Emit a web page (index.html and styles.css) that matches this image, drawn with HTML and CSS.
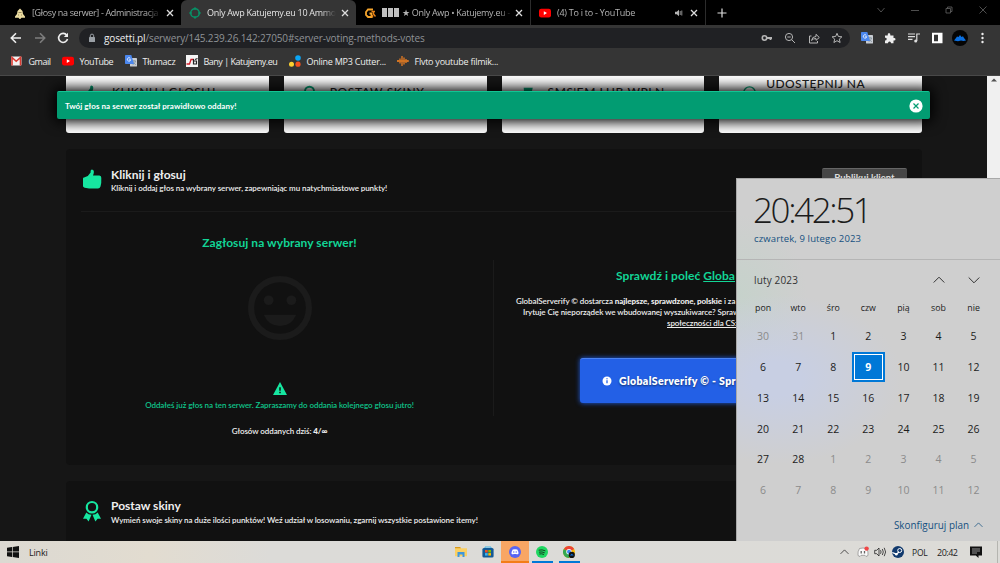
FILE: index.html
```html
<!DOCTYPE html>
<html lang="pl">
<head>
    <meta charset="UTF-8">
    <meta name="viewport" content="width=device-width, initial-scale=1.0">
    <title>Only Awp Katujemy.eu 10 Ammo</title>
    <link rel="stylesheet" href="styles.css">
</head>
<body>
<svg class="defs">
    <symbol id="close" viewBox="0 0 10 10"><path d="M2 2l6 6M8 2l-6 6" stroke="currentColor" stroke-width="1.3"/></symbol>
    <symbol id="youtube" viewBox="0 0 12 12"><rect x="0" y="1.8" width="12" height="8.6" rx="2.2" fill="#f00"/><path d="M4.8 4.2v3.8L8 6.1z" fill="#fff"/></symbol>
    <symbol id="translate" viewBox="0 0 12 12"><rect x="5" y="3" width="7" height="8.6" rx=".7" fill="#c9cdd3"/><path d="M7 6h4M9 5v1M10.5 6c-.5 2-1.500 3-3 3.800M8 6.500c.5 1.500 1.500 2.500 3 3.200" stroke="#6b7f8c" stroke-width=".6" fill="none"/><path d="M.7 0h5.600L9 9H.700Q0 9 0 8.300V.7Q0 0 .7 0z" fill="#4b87ee"/><path d="M5.300 3.300A1.700 1.700 0 1 0 5.700 4.700H4.200" stroke="#fff" stroke-width=".8" fill="none"/></symbol>
    <symbol id="up" viewBox="0 0 12 8"><path d="M.7 6.500L6 1.200l5.300 5.300" fill="none" stroke="currentColor" stroke-width="1"/></symbol>
    <symbol id="thumb" viewBox="0 0 20 20"><path d="M1 9.500Q1 8.500 2 8.500L5.800 7 8.600 3.400V2Q8.700.4 10 .4q1.900.3 1.900 2.400 0 1.700-.9 3.800h6.400q2 .2 1.900 2.200.3 5.400-.8 8.700-.7 1.900-2.500 1.900-7 .6-13.300-.7Q1 18.300 1 17.300z" fill="currentColor"/></symbol>
    <symbol id="award" viewBox="0 0 20 22"><circle cx="10" cy="7.200" r="5.200" fill="none" stroke="currentColor" stroke-width="2.200"/><path d="M4.300 12.500L1 18.800l3.400-.1L6.600 21.600 9.500 14.800Q6.300 14.700 4.300 12.500zM15.700 12.500L19 18.800l-3.400-.1-2.200 2.900-2.900-6.800q3.200-.1 5.200-2.300z" fill="currentColor"/></symbol>
</svg>
<div class="desktop">
    <div class="tabs">
        <div class="tab">
            <svg class="fav" viewBox="0 0 12 12"><path d="M6 1.500L8.500 4 9 7l2 2.500v1.300H7.500L6.300 12H5.600L4.500 10.800H1V9.500L3 7 3.500 4z" fill="#eadba0"/><path d="M4.500 5.500h3M4 8h1M7 8h1" stroke="#70623a" stroke-width=".7"/></svg>
            <span class="title t1">[Głosy na serwer] - Administracja</span>
            <svg class="x"><use href="#close"/></svg>
        </div>
        <div class="tab active">
            <svg class="fav" viewBox="0 0 12 12"><circle cx="6" cy="6" r="4.300" fill="none" stroke="#069468" stroke-width="1.500"/><path d="M6 0v3M6 9v3M0 6h3M9 6h3" stroke="#069468" stroke-width="1"/></svg>
            <span class="title t2">Only Awp Katujemy.eu 10 Ammo</span>
            <svg class="x"><use href="#close"/></svg>
        </div>
        <div class="tab sep">
            <svg class="fav" viewBox="0 0 12 12"><path d="M9 2.500H4L2 5v3l2 2h3.500V6.500H5.500" stroke="#f6a52c" stroke-width="1.800" fill="none"/><path d="M7.500 4.500H11M9.500 4.500V7L11.500 9.500M8.500 8v2.500" stroke="#e98317" stroke-width="1.400" fill="none"/></svg>
            <span class="blocks"><i></i><i></i><i></i></span>
            <span class="title t3">★ Only Awp • Katujemy.eu -</span>
            <svg class="x"><use href="#close"/></svg>
        </div>
        <div class="tab sep">
            <svg class="fav"><use href="#youtube"/></svg>
            <span class="title t4">(4) To i to - YouTube</span>
            <svg class="sound" viewBox="0 0 10 10"><path d="M1 3.700h1.800L5 1.700v6.600L2.800 6.300H1z" fill="currentColor"/><path d="M6.200 3v4M7.800 2.500v5" stroke="currentColor" stroke-width=".8"/></svg>
            <svg class="x"><use href="#close"/></svg>
        </div>
        <svg class="plus" viewBox="0 0 10 10"><path d="M5 .5v9M.5 5h9" stroke="#ddd" stroke-width="1.200"/></svg>
        <div class="winbtns">
            <svg viewBox="0 0 10 10"><path d="M1.500 3L5 7l3.500-4"/></svg>
            <svg viewBox="0 0 10 10"><path d="M1 5.500h8"/></svg>
            <svg viewBox="0 0 10 10"><path d="M2 3.500h4.500V8H2zM3.500 3.500V2H8v4.500H6.500"/></svg>
            <svg viewBox="0 0 10 10"><path d="M1.500 1.500l7 7M8.500 1.500l-7 7"/></svg>
        </div>
    </div>

    <div class="toolbar">
        <div class="nav">
            <svg viewBox="0 0 12 12"><path d="M11 6H1.500M6 1.300L1.300 6 6 10.700" stroke="#eee"/></svg>
            <svg viewBox="0 0 12 12"><path d="M1 6h9.500M6 1.300L10.700 6 6 10.700" stroke="#7d7d7d"/></svg>
            <svg viewBox="0 0 12 12"><path d="M9.800 3.300A4.500 4.500 0 1 0 10.500 7" stroke="#eee"/><path d="M11 .800V5H6.800z" fill="#eee"/></svg>
        </div>
        <div class="address">
            <svg class="lock" viewBox="0 0 8 10"><rect x="1" y="4" width="6" height="5" rx=".6" fill="#9aa0a6"/><path d="M2.300 4.500V2.800a1.700 1.700 0 0 1 3.400 0v1.700" fill="none" stroke="#9aa0a6"/></svg>
            <span class="url"><b>gosetti.pl</b>/serwery/145.239.26.142:27050#server-voting-methods-votes</span>
            <div class="addr-icons">
                <svg viewBox="0 0 12 12"><circle cx="3.500" cy="6" r="2.200" stroke-width="1.600"/><path d="M5.500 6h5.500M9.500 6v2" stroke-width="1.800"/></svg>
                <svg viewBox="0 0 12 12"><circle cx="5" cy="5" r="3.600"/><path d="M7.700 7.700L11 11M3.300 5h3.400"/></svg>
                <svg viewBox="0 0 12 12"><path d="M3.500 4H1.500v7h8V9M3.500 8.500Q4 4.500 8 4.500V2.300L11.300 5.500 8 8.300V6.500Q5 6.500 3.500 8.500z"/></svg>
                <svg viewBox="0 0 12 12"><path d="M6 1.300l1.400 3.200 3.500.3-2.600 2.300.8 3.400L6 8.700l-3.100 1.800.8-3.400L1.100 4.800l3.500-.3z"/></svg>
            </div>
        </div>
        <div class="ext">
            <svg viewBox="0 0 12 12"><use href="#translate"/></svg>
            <svg viewBox="0 0 12 12"><path d="M1 3.500h2.700Q3.400 1 5 1t1.400 2.500H9.500V6Q11.500 5.700 11.500 7.200T9.500 8.500V11.300H7Q7 9.500 5.500 9.500T4 11.300H1V8.500Q2.700 8.500 2.700 7T1 5.700z" fill="#eee"/></svg>
            <svg viewBox="0 0 12 12"><path d="M0 2h7M0 4.700h7M0 7.400h4.500" stroke="#ddd" stroke-width="1.200"/><circle cx="7.700" cy="9" r="1.500" fill="#ddd"/><path d="M8.800 9V2H12" stroke="#ddd" stroke-width="1.200" fill="none"/></svg>
            <svg viewBox="0 0 12 12"><path d="M1 .8h10.500v10.400H1zM3 2.800v6.400h4V2.800z" fill="#fff" fill-rule="evenodd"/></svg>
            <svg class="avatar" viewBox="0 0 16 16"><circle cx="8" cy="8" r="8" fill="#050505"/><path d="M2 10.500L4 8l1-1.500L6.500 7 8 5l1.500 2L11 6.300 12 8l2 2.500L11.500 11 9 10.500 6 11.200z" fill="#0a6fe0"/></svg>
            <svg viewBox="0 0 12 12"><g fill="#eee"><circle cx="5.500" cy="2" r="1.200"/><circle cx="5.500" cy="6" r="1.200"/><circle cx="5.500" cy="10" r="1.200"/></g></svg>
        </div>
    </div>

    <div class="bookmarks">
        <div class="bm"><svg viewBox="0 0 12 12"><rect y="1.500" width="10.500" height="9" rx="1" fill="#f2f2f2"/><path d="M1 10.500V2.500L5.200 6.300 9.500 2.500v8" fill="none" stroke="#d93a31" stroke-width="1.600"/></svg><span>Gmail</span></div>
        <div class="bm"><svg><use href="#youtube"/></svg><span>YouTube</span></div>
        <div class="bm"><svg><use href="#translate"/></svg><span>Tłumacz</span></div>
        <div class="bm"><svg viewBox="0 0 12 12"><path d="M0 0h12v12H0z" fill="#f5f5f5"/><path d="M.5 9h3L5 4.500h3" stroke="#d21f2b" stroke-width="1.300" fill="none"/><path d="M7.500 4v5h3V6H8M9 4.500l2.500-1" stroke="#222" stroke-width="1.200" fill="none"/></svg><span>Bany | Katujemy.eu</span></div>
        <div class="bm"><svg viewBox="0 0 12 12"><circle cx="9" cy="3" r="2.800" fill="#0aa5f5"/><circle cx="2.500" cy="9.200" r="2.500" fill="#fdd02f"/><circle cx="9" cy="9.200" r="2.600" fill="#f4511e"/></svg><span>Online MP3 Cutter...</span></div>
        <div class="bm"><svg viewBox="0 0 12 12"><path d="M1 5v2M3 3.500v5M5 1v10M7 2.500v7M9 4v4M11 5v2M0 6h11.500" stroke="#f58220" stroke-width="1.200"/></svg><span>Flvto youtube filmik...</span></div>
    </div>

    <div class="viewport">
        <div class="page">
            <div class="cards">
                <div class="card"><svg><use href="#thumb"/></svg><span class="c1">KLIKNIJ I GŁOSUJ</span></div>
                <div class="card"><svg><use href="#award"/></svg><span class="c2">POSTAW SKINY</span></div>
                <div class="card"><svg viewBox="0 0 20 20"><path d="M6 3h9.500L14 10H6.500z" fill="currentColor"/></svg><span class="c3">SMS'EM LUB WPLN</span></div>
                <div class="card high"><svg viewBox="0 0 20 20"><circle cx="10" cy="8" r="6" fill="none" stroke="currentColor" stroke-width="1.500"/></svg><span class="c4">UDOSTĘPNIJ NA</span></div>
            </div>

            <section class="panel">
                <header>
                    <svg class="ico"><use href="#thumb"/></svg>
                    <div>
                        <h2>Kliknij i głosuj</h2>
                        <p>Kliknij i oddaj głos na wybrany serwer, zapewniając mu natychmiastowe punkty!</p>
                    </div>
                    <button class="gray">Publikuj klient</button>
                </header>
                <div class="cols">
                    <div class="left">
                        <h3>Zagłosuj na wybrany serwer!</h3>
                        <svg class="smile" viewBox="0 0 62 62"><circle cx="31" cy="31" r="28" fill="none" stroke="#1b1b1b" stroke-width="6"/><g fill="#1b1b1b"><circle cx="20" cy="23.500" r="4.700"/><circle cx="42" cy="23.500" r="4.700"/><path d="M15.300 37.500h31.400Q42 48.500 31 48.500T15.300 37.500z"/></g></svg>
                        <svg class="warn" viewBox="0 0 14 13"><path d="M7 0l7 13H0z" fill="#16e6a0"/><path d="M7 5.200v3.600M7 9.800v1.500" stroke="#111" stroke-width="1.500"/></svg>
                        <p class="done">Oddałeś już głos na ten serwer. Zapraszamy do oddania kolejnego głosu jutro!</p>
                        <p class="count">Głosów oddanych dziś: <b>4/∞</b></p>
                    </div>
                    <div class="right">
                        <h3>Sprawdź i poleć <u>Globa</u></h3>
                        <p class="l1">GlobalServerify © dostarcza <b>najlepsze, sprawdzone, polskie</b> i za</p>
                        <p class="l2">Irytuje Cię nieporządek we wbudowanej wyszukiwarce? Spraw</p>
                        <p class="l3"><u>społeczności dla CS:</u></p>
                        <div class="blue"><svg viewBox="0 0 10 10"><circle cx="5" cy="5" r="4.500" fill="#fff"/><path d="M5 4.300v3M5 2.200v1.100" stroke="#2360e6" stroke-width="1.300"/></svg><span>GlobalServerify © - Spr</span></div>
                    </div>
                </div>
            </section>

            <section class="panel second">
                <header>
                    <svg class="ico award"><use href="#award"/></svg>
                    <div>
                        <h2>Postaw skiny</h2>
                        <p>Wymień swoje skiny na duże ilości punktów! Weź udział w losowaniu, zgarnij wszystkie postawione itemy!</p>
                    </div>
                </header>
            </section>

            <div class="alert">
                <span>Twój głos na serwer został prawidłowo oddany!</span>
                <svg viewBox="0 0 14 14"><circle cx="7" cy="7" r="6.600" fill="#fff"/><path d="M4.500 4.500l5 5M9.500 4.500l-5 5" stroke="#029c72" stroke-width="1.200"/></svg>
            </div>
        </div>
        <div class="scrollbar"><svg viewBox="0 0 6 4"><path d="M0 3.500L3 .5l3 3z" fill="#505050"/></svg></div>
    </div>

    <div class="taskbar">
        <svg class="win" viewBox="0 0 12 12"><path d="M0 1.700L5 1v4.600H0zM5.700.9L12 0v5.600H5.700zM0 6.300h5V11l-5-.7zM5.700 6.300H12V12l-6.300-.9z" fill="#111"/></svg>
        <span class="linki">Linki</span>
        <div class="apps">
            <div class="app"><svg viewBox="0 0 12 12"><path d="M0 1h5l1 1.200h6v8H0z" fill="#fbd063"/><path d="M0 1h5l1 1.200H0z" fill="#d99a1c"/><path d="M2.500 6h7v5H7.500V8.500h-3V11h-2z" fill="#3f97dd"/></svg></div>
            <div class="app"><svg viewBox="0 0 12 12"><path d="M3 2.500V1h6v1.500" stroke="#42b6e8" fill="none"/><rect x=".4" y="2" width="11.200" height="9.600" rx="1.500" fill="#135a96"/><path d="M3 4h2.700v2.500H3z" fill="#f25022"/><path d="M6.300 4H9v2.500H6.300z" fill="#7fba00"/><path d="M3 7.100h2.700v2.500H3z" fill="#38b6f1"/><path d="M6.300 7.100H9v2.500H6.300z" fill="#ffb900"/></svg></div>
            <div class="app discord"><svg viewBox="0 0 12 12"><circle cx="6" cy="6" r="6" fill="#5865f2"/><path d="M3.700 3.600Q6 2.900 8.300 3.600 9.500 5.500 9.500 7.800L8 8.600 7.400 7.900H4.600L4 8.600 2.500 7.800Q2.500 5.500 3.700 3.600z" fill="#fff"/><circle cx="4.800" cy="6" r=".7" fill="#5865f2"/><circle cx="7.200" cy="6" r=".7" fill="#5865f2"/></svg></div>
            <div class="app run"><svg viewBox="0 0 12 12"><circle cx="6" cy="6" r="6" fill="#1ed760"/><path d="M2.700 4.200q3.500-1 6.700.7M3 6.200q3-.8 5.700.6M3.300 8q2.500-.6 4.700.5" stroke="#173d24" fill="none"/></svg></div>
            <div class="app run"><svg viewBox="0 0 12 12"><circle cx="6" cy="6" r="6" fill="#fbbc05"/><path d="M6 6L.8 3A6 6 0 0 1 11.200 3z" fill="#ea4335"/><path d="M.8 3A6 6 0 0 0 6 12L8 7z" fill="#34a853"/><circle cx="6" cy="5.700" r="2.700" fill="#fff"/><circle cx="6" cy="5.700" r="2" fill="#4285f4"/><circle cx="8.800" cy="8.900" r="3.100" fill="#111"/><path d="M6.800 9.500l2-1.800 2 1.800z" fill="#0a6fe0"/></svg></div>
        </div>
        <div class="tray">
            <svg class="chev"><use href="#up"/></svg>
            <svg class="dc" viewBox="0 0 12 12"><path d="M2.500 2.500Q6 1.500 9.500 2.500 11.500 5.500 11 9.500L9 10.500 8 9.300H4L3 10.500 1 9.500Q.5 5.500 2.500 2.500z" fill="#fafafa" stroke="#777" stroke-width=".6"/><path d="M4.200 5v2.500M7.500 5v2.500" stroke="#666" stroke-width="1.300"/><circle cx="9.600" cy="2.600" r="2.200" fill="#f04747"/></svg>
            <svg class="spk" viewBox="0 0 13 12"><path d="M.7 4.300h2L5 2v8L2.700 7.700h-2zM6.500 4.200q1.200 1.800 0 3.600M8.300 3q2 3 0 6M10.200 1.800q2.800 4.200 0 8.400" fill="none" stroke="#222" stroke-width=".8"/></svg>
            <svg class="steam" viewBox="0 0 12 12"><circle cx="6" cy="6" r="6" fill="#123a6d"/><circle cx="7.700" cy="4.500" r="2" fill="none" stroke="#fff" stroke-width="1"/><path d="M.3 6.500l4 1.700L7 6" stroke="#fff" stroke-width="1.300" fill="none"/><circle cx="4.300" cy="8.300" r="1.300" fill="#fff"/></svg>
            <span class="lang">POL</span>
            <span class="clock">20:42</span>
            <svg class="note" viewBox="0 0 12 12"><path d="M0 .5h12v9H8.500v2.500L5.800 9.500H0z" fill="#111"/><path d="M2 3h8M2 5h8M2 7h5" stroke="#ccc" stroke-width=".7"/></svg>
        </div>
    </div>

    <div class="calendar">
        <div class="now">
            <div class="time">20:42:51</div>
            <div class="date">czwartek, 9 lutego 2023</div>
        </div>
        <div class="month">
            <span>luty 2023</span>
            <svg viewBox="0 0 12 8"><use href="#up"/></svg>
            <svg class="down" viewBox="0 0 12 8"><use href="#up"/></svg>
        </div>
        <div class="week names"><span>pon</span><span>wto</span><span>śro</span><span>czw</span><span>pią</span><span>sob</span><span>nie</span></div>
        <div class="week"><span class="off">30</span><span class="off">31</span><span>1</span><span>2</span><span>3</span><span>4</span><span>5</span></div>
        <div class="week"><span>6</span><span>7</span><span>8</span><span class="today">9</span><span>10</span><span>11</span><span>12</span></div>
        <div class="week"><span>13</span><span>14</span><span>15</span><span>16</span><span>17</span><span>18</span><span>19</span></div>
        <div class="week"><span>20</span><span>21</span><span>22</span><span>23</span><span>24</span><span>25</span><span>26</span></div>
        <div class="week"><span>27</span><span>28</span><span class="off">1</span><span class="off">2</span><span class="off">3</span><span class="off">4</span><span class="off">5</span></div>
        <div class="week"><span class="off">6</span><span class="off">7</span><span class="off">8</span><span class="off">9</span><span class="off">10</span><span class="off">11</span><span class="off">12</span></div>
        <div class="plan"><span>Skonfiguruj plan</span><svg><use href="#up"/></svg></div>
    </div>
</div>
</body>
</html>
```
FILE: styles.css
```css
* {
    box-sizing: border-box;
}

body {
    margin: 0;
    font-family: "Open Sans", "Noto Sans", sans-serif;
    font-size: 9px;
    overflow: hidden;
}

p, h2, h3 {
    margin: 0;
}

svg {
    flex: none;
}

.defs {
    position: absolute;
    width: 0;
    height: 0;
}

.desktop {
    position: relative;
    width: 1000px;
    height: 563px;
    display: flex;
    flex-direction: column;
    background: #161616;
    overflow: hidden;
    white-space: nowrap;
}

/* browser tabs */
.tabs {
    height: 25px;
    background: #000;
    display: flex;
    padding-left: 6px;
    color: #b4b4b4;
}

.tab {
    width: 175px;
    height: 25px;
    display: flex;
    align-items: center;
    padding: 0 6px 0 8px;
}

.tab.active {
    background: #353535;
    border-radius: 6px 6px 0 0;
    color: #e4e4e4;
}

.tab.sep {
    border-right: 1px solid #2c2c2c;
}

.fav {
    width: 12px;
    height: 12px;
    margin-right: 6px;
}

.title {
    flex: 1;
    overflow: hidden;
    margin-right: 4px;
    -webkit-mask-image: linear-gradient(to right, #000 88%, transparent);
    mask-image: linear-gradient(to right, #000 88%, transparent);
}

.x {
    width: 10px;
    height: 10px;
    color: #ddd;
}

.sound {
    width: 10px;
    height: 10px;
    margin-right: 5px;
}

.blocks {
    display: flex;
    gap: 1px;
    margin-right: 3px;
}

.blocks i {
    width: 5px;
    height: 9px;
    background: #c0c0c0;
}

.t1 { letter-spacing: -0.35px; }
.t2 { letter-spacing: -0.3px; }
.t3 { letter-spacing: -0.3px; margin-right: 2px; }
.t4 { letter-spacing: -0.25px; }

.plus {
    width: 10px;
    height: 10px;
    margin: 8px 0 0 11px;
}

.winbtns {
    margin-left: auto;
    display: flex;
    gap: 24px;
    padding: 5px 12px 0 0;
}

.winbtns svg {
    width: 10px;
    height: 10px;
    fill: none;
    stroke: #626262;
    stroke-width: 0.8;
}

/* address bar */
.toolbar {
    height: 25px;
    background: #353535;
    display: flex;
    align-items: center;
    padding-left: 10px;
}

.nav {
    display: flex;
    gap: 11.5px;
    width: 69px;
}

.nav svg {
    width: 12px;
    height: 12px;
    fill: none;
    stroke-width: 1.6;
}

.address {
    width: 771px;
    height: 20px;
    border-radius: 10px;
    background: #202124;
    display: flex;
    align-items: center;
    padding: 0 7px 0 9px;
}

.lock {
    width: 8px;
    height: 10px;
    margin-right: 8px;
}

.url {
    font-size: 10px;
    color: #8f9296;
    letter-spacing: -0.13px;
}

.url b {
    font-weight: 400;
    color: #eee;
}

.addr-icons {
    margin-left: auto;
    display: flex;
    gap: 11.5px;
}

.addr-icons svg {
    width: 12px;
    height: 12px;
    fill: none;
    stroke: #b5b5b5;
}

.ext {
    display: flex;
    align-items: center;
    gap: 11.3px;
    padding-left: 11px;
}

.ext svg {
    width: 12px;
    height: 12px;
}

.ext .avatar {
    width: 16px;
    height: 16px;
    margin: 0 -2px;
}

.bookmarks {
    height: 26px;
    padding: 0 0 3px 11px;
    background: #353535;
    border-bottom: 1px solid #484848;
    display: flex;
    align-items: center;
    color: #eee;
    letter-spacing: -0.25px;
}

.bm {
    display: flex;
    align-items: center;
    gap: 5.5px;
}

.bm:nth-child(1) { width: 51px; letter-spacing: -0.5px; }
.bm:nth-child(2) { width: 63px; letter-spacing: -0.5px; }
.bm:nth-child(3) { width: 61px; }
.bm:nth-child(4) { width: 103px; letter-spacing: -0.5px; }
.bm:nth-child(5) { width: 108px; }

.bm svg {
    width: 12px;
    height: 12px;
}

/* page content */
.viewport {
    height: 465px;
    display: flex;
    font-family: Lato, "Open Sans", sans-serif;
}

.page {
    position: relative;
    width: 987px;
    padding: 0 65px 0 66px;
    overflow: hidden;
}

.scrollbar {
    width: 13px;
    background: #f0f0f0;
    text-align: center;
    line-height: 6px;
}

.scrollbar svg {
    width: 6px;
    height: 4px;
}

.cards {
    display: grid;
    grid-template-columns: repeat(4, 1fr);
    gap: 15px;
}

.card {
    height: 57px;
    background: #fff;
    border-radius: 0 0 3px 3px;
    display: flex;
    padding: 8px 0 0 16px;
    font-size: 12px;
    font-weight: 500;
    color: #222;
}

.card svg {
    width: 19px;
    height: 19px;
    margin: 1px 11px 0 0;
    color: #04a577;
}

.card.high {
    padding-top: 0;
}

.card.high svg {
    margin: 9px 12px 0 5px;
}

.c1 { letter-spacing: 0.4px; }
.c2 { letter-spacing: 0.6px; }
.c3 { letter-spacing: 0.6px; }
.c4 { letter-spacing: 0.4px; margin-left: -5px; }

.panel {
    margin-top: 16px;
    width: 856px;
    height: 316px;
    background: #111;
    border-radius: 4px;
    color: #eee;
}

.panel header {
    display: flex;
    height: 63px;
    margin: 0 15px;
    padding-top: 18px;
    border-bottom: 1px solid #1b1b1b;
}

.panel.second header {
    border: 0;
    padding-top: 17px;
}

.ico {
    width: 20px;
    height: 20px;
    margin: 2px 9px 0 1px;
    color: #16e6a0;
}

.ico.award {
    height: 22px;
    margin-top: 2px;
}

.panel h2 {
    font-size: 12px;
    line-height: 15px;
    margin-bottom: 1px;
}

.panel p {
    font-size: 8px;
    font-weight: 600;
    line-height: 11px;
    letter-spacing: -0.07px;
}

.second p {
    padding-top: 1px;
}

.gray {
    margin: 1px 0 0 auto;
    padding: 0 0 5px;
    width: 85px;
    height: 22px;
    border: 0;
    border-top: 1px solid #666;
    border-radius: 2px;
    background: #464646;
    color: #ddd;
    font: 700 9.5px Lato, sans-serif;
}

.cols {
    display: flex;
}

.left {
    width: 427px;
    display: flex;
    flex-direction: column;
    align-items: center;
    padding-top: 23px;
}

.panel h3 {
    font-size: 12px;
    line-height: 16px;
    color: #12d596;
    letter-spacing: 0.06px;
}

.smile {
    width: 64px;
    height: 64px;
    margin-top: 25px;
}

.warn {
    width: 14px;
    height: 13px;
    margin: 42px 0 5px;
}

.panel .done {
    color: #0fc48a;
    margin-bottom: 15px;
}

.right {
    margin-top: 48px;
    height: 156px;
    width: 429px;
    border-left: 1px solid #1b1b1b;
    padding-top: 8px;
}

.right h3 { padding-left: 122px; margin-bottom: 12px; }
.right .l1 { padding-left: 22px; }
.right .l2 { padding-left: 29px; }
.right .l3 { padding-left: 173px; }

.blue {
    margin: 29px 0 0 86px;
    width: 256px;
    height: 45px;
    padding-left: 22px;
    background: #2360e6;
    border-top: 1px solid #4c82f2;
    border-radius: 3px;
    box-shadow: 0 0 5px #2360e6;
    display: flex;
    align-items: center;
    gap: 7px;
    font-size: 10.5px;
    font-weight: 800;
    letter-spacing: 0.35px;
    color: #fff;
    text-shadow: 0 1px 2px rgba(0, 0, 0, 0.5);
}

.blue svg {
    width: 10px;
    height: 10px;
}

.alert {
    position: absolute;
    left: 57px;
    top: 15px;
    width: 873px;
    height: 28px;
    padding: 0 7px 0 8px;
    background: #029c72;
    border-top: 1px solid #13c493;
    border-radius: 2px;
    box-shadow: 0 0 13px 3px #000;
    display: flex;
    align-items: center;
    justify-content: space-between;
    color: #fff;
    font-size: 8px;
    font-weight: 700;
    letter-spacing: 0.06px;
}

.alert svg {
    width: 14px;
    height: 14px;
}

/* windows taskbar */
.taskbar {
    height: 22px;
    display: flex;
    align-items: center;
    padding-left: 7px;
    background: linear-gradient(to right, #dcd9d2, #e2dcd0 15%, #dcdbd8 27%, #dcdbd7);
    color: #222;
}

.win {
    width: 12px;
    height: 12px;
    margin-right: 10px;
}

.linki {
    width: 418px;
    letter-spacing: -0.2px;
}

.apps {
    display: flex;
    height: 22px;
}

.app {
    width: 27.2px;
    display: flex;
    align-items: center;
    justify-content: center;
}

.app svg {
    width: 12px;
    height: 12px;
}

.discord {
    background: #f9a663;
    border-bottom: 2px solid #f37d18;
    padding-top: 2px;
}

.run {
    background: linear-gradient(#0078d7, #0078d7) center bottom / 21px 2px no-repeat;
}

.tray {
    margin-left: auto;
    height: 22px;
    width: 158px;
    border-right: 1px solid #b5b5b0;
    margin-right: 2px;
    display: flex;
    align-items: center;
}

.chev { width: 9px; height: 6px; margin-right: 8px; }
.dc { width: 12px; height: 12px; margin-right: 5px; }
.spk { width: 13px; height: 12px; margin-right: 5px; }
.steam { width: 12px; height: 12px; margin-right: 8px; }
.lang { width: 25px; letter-spacing: -0.2px; font-size: 8.5px; }
.clock { width: 33px; letter-spacing: -0.5px; }
.note { width: 12px; height: 12px; }

/* calendar flyout */
.calendar {
    position: absolute;
    left: 736px;
    top: 178px;
    width: 264px;
    height: 363px;
    border: 1px solid #a9a9a9;
    border-width: 1px 0 0 1px;
    background:
        radial-gradient(ellipse 125px 85px at 40px 200px, #c8cfe3 20%, rgba(200, 207, 227, 0)),
        radial-gradient(ellipse 70px 80px at 0 115px, #c6d2cb, rgba(198, 210, 203, 0)),
        #cfcfcf;
    color: #1c1c1c;
}

.now {
    height: 81px;
    border-bottom: 1px solid #b5b5b5;
    padding: 9px 0 0 16px;
}

.time {
    font-size: 35px;
    font-weight: 300;
    line-height: 44px;
    letter-spacing: -2.4px;
}

.date {
    padding-left: 1px;
    font-size: 9.5px;
    line-height: 13px;
    letter-spacing: 0.13px;
    color: #14507f;
}

.month {
    display: flex;
    align-items: center;
    height: 39px;
    padding-left: 17px;
    font-size: 10px;
    letter-spacing: 0.15px;
    color: #333;
}

.month span {
    width: 179px;
}

.month svg {
    width: 12px;
    height: 8px;
    margin-right: 23px;
}

.month .down {
    transform: rotate(180deg);
    margin: 0;
}

.week {
    display: grid;
    grid-template-columns: repeat(7, 35.1px);
    padding-left: 8.5px;
    height: 30.8px;
    text-align: center;
    align-items: center;
    font-size: 10.5px;
}

.week.names {
    height: 18px;
    margin-bottom: 3.9px;
    font-size: 8.8px;
}

.off {
    color: #8b8b8b;
}

.today {
    width: 33px;
    height: 30px;
    line-height: 24px;
    margin: auto;
    background: #0078d7;
    border: 1px solid #0078d7;
    box-shadow: inset 0 0 0 1px #0078d7, inset 0 0 0 2px #fff;
    padding-top: 2px;
    color: #fff;
    font-weight: 700;
}

.plan {
    display: flex;
    align-items: center;
    justify-content: flex-end;
    gap: 5px;
    height: 38px;
    padding-right: 17px;
    font-size: 9.9px;
    color: #14507f;
}

.plan svg {
    width: 9px;
    height: 6px;
}
```
